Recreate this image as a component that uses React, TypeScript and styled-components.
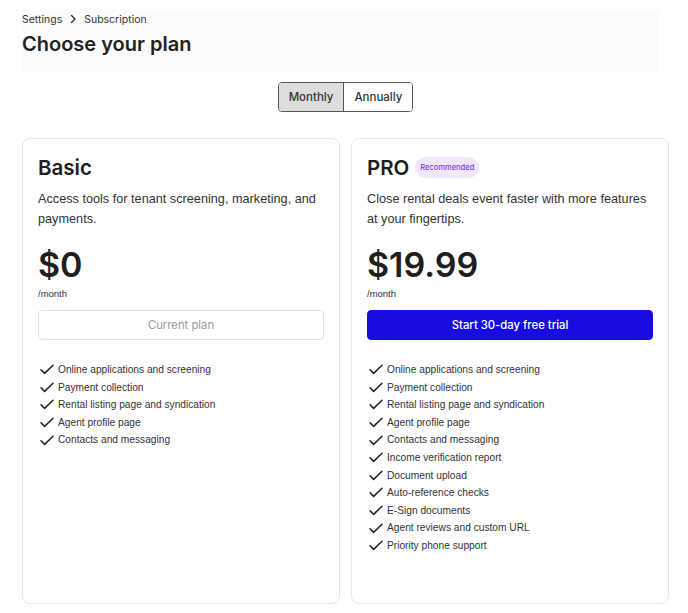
import React, { useState } from "react";
import styled, { createGlobalStyle } from "styled-components";

const GlobalStyle = createGlobalStyle`
  body {
    margin: 0;
    background: #ffffff;
    font-family: Inter, "Liberation Sans", sans-serif;
    color: #222222;
  }
`;

const Page = styled.div`
  padding: 10px 19px 9px 22px;
`;

const Header = styled.div`
  background: #fcfcfc;
  margin-right: 11px;
  padding: 1px 0 12px;
  height: 49px;
`;

const Crumbs = styled.div`
  display: flex;
  align-items: center;
  gap: 7px;
  font-size: 10.5px;
  color: #333333;
  height: 16px;
`;

const Title = styled.h1`
  margin: 2px 0 0;
  font-size: 20px;
  font-weight: 600;
  line-height: 30px;
  color: #222222;
`;

const ToggleRow = styled.div`
  display: flex;
  justify-content: center;
  margin: 10px 0 26px;
`;

const Toggle = styled.div`
  display: flex;
  border: 1px solid #555555;
  border-radius: 4px;
  overflow: hidden;
  height: 28px;
`;

const ToggleButton = styled.button<{ $active: boolean }>`
  border: none;
  border-left: ${(p) => (p.$active ? "none" : "1px solid #555555")};
  background: ${(p) => (p.$active ? "#dddddd" : "#ffffff")};
  font-family: inherit;
  font-size: 11.5px;
  font-weight: 500;
  color: #333333;
  padding: 0 10px;
  cursor: pointer;
`;

const Cards = styled.div`
  display: grid;
  grid-template-columns: 1fr 1fr;
  gap: 11px;
`;

const Card = styled.div`
  border: 1px solid #e6e6e6;
  border-radius: 8px;
  padding: 13px 15px 48px;
  min-height: 403px;
`;

const NameRow = styled.div`
  display: flex;
  align-items: center;
  gap: 6px;
  height: 30px;
`;

const PlanName = styled.h2`
  margin: 0;
  font-size: 20.5px;
  font-weight: 600;
  color: #1e1e1e;
`;

const Badge = styled.span`
  background: #f2e8fd;
  color: #7a3ad9;
  font-size: 7.5px;
  font-weight: 500;
  line-height: 11px;
  padding: 5px 5px;
  border-radius: 10px;
`;

const Description = styled.p`
  margin: 7px 0 0;
  font-family: "Liberation Sans", Arial, sans-serif;
  font-size: 12.7px;
  line-height: 20px;
  color: #333333;
`;

const Price = styled.div`
  margin-top: 16px;
  font-size: 34px;
  font-weight: 600;
  line-height: 40px;
  color: #1e1e1e;
`;

const Period = styled.div`
  font-family: "Liberation Sans", Arial, sans-serif;
  font-size: 9.5px;
  color: #333333;
  line-height: 14px;
  margin-top: 2px;
`;

const ActionButton = styled.button<{ $primary?: boolean }>`
  display: block;
  width: 100%;
  height: 30px;
  margin-top: 9px;
  border-radius: 4px;
  font-family: inherit;
  font-size: 11.3px;
  font-weight: ${(p) => (p.$primary ? 500 : 400)};
  border: 1px solid ${(p) => (p.$primary ? "#180ce0" : "#e2e2e2")};
  background: ${(p) => (p.$primary ? "#180ce0" : "#ffffff")};
  color: ${(p) => (p.$primary ? "#ffffff" : "#999999")};
`;

const Features = styled.ul`
  list-style: none;
  margin: 21px 0 0;
  padding: 0 0 0 2px;
`;

const Feature = styled.li`
  display: flex;
  align-items: center;
  gap: 4px;
  font-family: "Liberation Sans", Arial, sans-serif;
  font-size: 10.2px;
  line-height: 17.6px;
  color: #333333;
`;

const Check = () => (
  <svg width="14" height="11" viewBox="0 0 14 11" fill="none" stroke="#222" strokeWidth="1.5" strokeLinecap="round" strokeLinejoin="round">
    <path d="M1 5.8 4.6 9.4 13 1.2" />
  </svg>
);

const Chevron = () => (
  <svg width="8" height="10" viewBox="0 0 8 10" fill="none" stroke="#333" strokeWidth="1.4" strokeLinecap="round" strokeLinejoin="round">
    <path d="M2.5 1.5 6 5 2.5 8.5" />
  </svg>
);

const basicFeatures = [
  "Online applications and screening",
  "Payment collection",
  "Rental listing page and syndication",
  "Agent profile page",
  "Contacts and messaging",
];

const proFeatures = [
  ...basicFeatures,
  "Income verification report",
  "Document upload",
  "Auto-reference checks",
  "E-Sign documents",
  "Agent reviews and custom URL",
  "Priority phone support",
];

export default function App() {
  const [period, setPeriod] = useState("monthly");

  return (
    <Page>
      <GlobalStyle />
      <Header>
        <Crumbs>
          <span>Settings</span>
          <Chevron />
          <span>Subscription</span>
        </Crumbs>
        <Title>Choose your plan</Title>
      </Header>

      <ToggleRow>
        <Toggle>
          <ToggleButton $active={period === "monthly"} onClick={() => setPeriod("monthly")}>
            Monthly
          </ToggleButton>
          <ToggleButton $active={period === "annually"} onClick={() => setPeriod("annually")}>
            Annually
          </ToggleButton>
        </Toggle>
      </ToggleRow>

      <Cards>
        <Card>
          <NameRow>
            <PlanName>Basic</PlanName>
          </NameRow>
          <Description>Access tools for tenant screening, marketing, and payments.</Description>
          <Price>$0</Price>
          <Period>/month</Period>
          <ActionButton>Current plan</ActionButton>
          <Features>
            {basicFeatures.map((f) => (
              <Feature key={f}>
                <Check />
                {f}
              </Feature>
            ))}
          </Features>
        </Card>

        <Card>
          <NameRow>
            <PlanName>PRO</PlanName>
            <Badge>Recommended</Badge>
          </NameRow>
          <Description>Close rental deals event faster with more features at your fingertips.</Description>
          <Price>$19.99</Price>
          <Period>/month</Period>
          <ActionButton $primary>Start 30-day free trial</ActionButton>
          <Features>
            {proFeatures.map((f) => (
              <Feature key={f}>
                <Check />
                {f}
              </Feature>
            ))}
          </Features>
        </Card>
      </Cards>
    </Page>
  );
}
